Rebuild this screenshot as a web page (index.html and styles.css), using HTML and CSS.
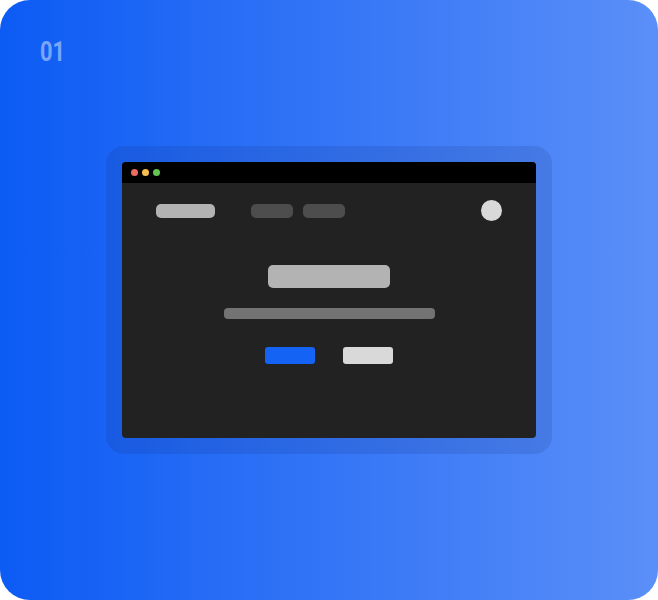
FILE: index.html
```html
<!DOCTYPE html>
<html lang="en">
<head>
  <meta charset="UTF-8">
  <title>Step 01</title>
  <link rel="stylesheet" href="styles.css">
</head>
<body>
  <div class="card">
    <div class="step"><span>01</span></div>

    <div class="frame">
      <div class="window">
        <div class="titlebar">
          <span class="dot red"></span>
          <span class="dot yellow"></span>
          <span class="dot green"></span>
        </div>
        <div class="screen">
          <div class="nav">
            <div class="logo"></div>
            <div class="links">
              <div class="link"></div>
              <div class="link"></div>
            </div>
            <div class="avatar"></div>
          </div>
          <div class="hero">
            <div class="headline"></div>
            <div class="subline"></div>
            <div class="actions">
              <div class="btn primary"></div>
              <div class="btn secondary"></div>
            </div>
          </div>
        </div>
      </div>
    </div>
  </div>
</body>
</html>
```

FILE: styles.css
```css
body {
  margin: 0;
  background: #ffffff;
  font-family: Roboto, 'Liberation Sans', sans-serif;
}

.card {
  width: 658px;
  height: 600px;
  box-sizing: border-box;
  padding: 36px 0 0 40px;
  border-radius: 30px;
  background: linear-gradient(to right, #0c5bf4, #5b8ff8);
  display: flex;
  flex-direction: column;
}

.step {
  font-size: 28px;
  font-weight: 700;
  line-height: 32px;
  height: 32px;
  color: rgba(255, 255, 255, 0.45);
}

/* condensed numerals */
.step span {
  display: inline-block;
  transform: scaleX(0.78);
  transform-origin: left center;
}

.frame {
  width: 446px;
  height: 308px;
  box-sizing: border-box;
  margin: 78px 0 0 66px;
  padding: 16px;
  border-radius: 18px;
  background: rgba(20, 40, 110, 0.14);
}

.window {
  height: 100%;
  border-radius: 4px;
  overflow: hidden;
  background: #222222;
  display: flex;
  flex-direction: column;
}

.titlebar {
  height: 21px;
  background: #000000;
  display: flex;
  align-items: center;
  gap: 4px;
  padding-left: 9px;
}

.dot {
  width: 7px;
  height: 7px;
  border-radius: 50%;
}

.red { background: #ed6a5e; }
.yellow { background: #f5bf4f; }
.green { background: #62c554; }

.screen {
  flex: 1;
  padding: 17px 34px 0;
}

.nav {
  display: flex;
  align-items: center;
  height: 21px;
}

.logo {
  width: 59px;
  height: 14px;
  border-radius: 5px;
  background: #b3b3b3;
}

.links {
  display: flex;
  gap: 10px;
  margin-left: 36px;
}

.link {
  width: 42px;
  height: 14px;
  border-radius: 5px;
  background: #4d4d4d;
}

.avatar {
  width: 21px;
  height: 21px;
  border-radius: 50%;
  background: #d9d9d9;
  margin-left: auto;
}

.hero {
  display: flex;
  flex-direction: column;
  align-items: center;
  margin-top: 44px;
}

.headline {
  width: 122px;
  height: 23px;
  border-radius: 5px;
  background: #b3b3b3;
}

.subline {
  width: 211px;
  height: 11px;
  border-radius: 4px;
  background: #737373;
  margin-top: 20px;
}

.actions {
  display: flex;
  gap: 28px;
  margin-top: 28px;
}

.btn {
  width: 50px;
  height: 17px;
  border-radius: 3px;
}

.primary { background: #1463f5; }
.secondary { background: #d9d9d9; }
```
